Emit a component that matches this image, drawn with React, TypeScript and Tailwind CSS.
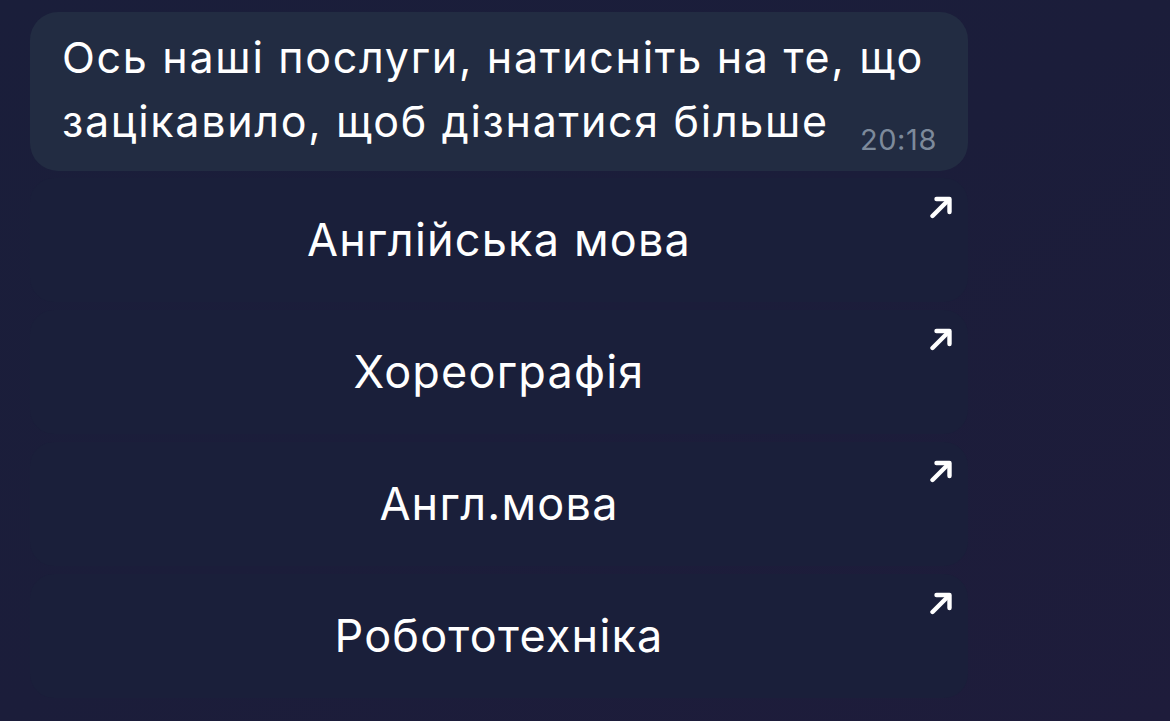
import React from "react";

function Arrow() {
  return (
    <svg width="24" height="24" viewBox="0 0 24 24" fill="none" className="absolute right-[15px] top-[17px]">
      <path d="M3.5 21 L19.5 5" stroke="white" strokeWidth="4.4" strokeLinecap="round" />
      <path d="M7.5 4 H20.5 V17" stroke="white" strokeWidth="4.4" strokeLinecap="round" strokeLinejoin="round" />
    </svg>
  );
}

const items = ["Англійська мова", "Хореографія", "Англ.мова", "Робототехніка"];

export default function App() {
  return (
    <div
      className="w-[1170px] h-[721px] overflow-hidden bg-gradient-to-br from-[#1a1e3a] via-[#1b1d3a] to-[#1e1c3b] pl-[30px] pt-[12px]"
      style={{ fontFamily: "Inter, Roboto, 'Noto Sans', sans-serif" }}
    >
      <div className="w-[938px] flex flex-col gap-[7px]">
        <div className="h-[159px] rounded-[28px] bg-[#222c42] pl-[32px] pr-[20px] pt-[13px] relative">
          <div className="text-white text-[43px] leading-[64px] tracking-[1.7px] whitespace-nowrap">
            Ось наші послуги, натисніть на те, що
            <br />
            зацікавило, щоб дізнатися більше
          </div>
          <div className="absolute right-[31px] top-[110px] text-[29px] leading-[36px] tracking-[0.6px] text-[#7d8a9b]">20:18</div>
        </div>
        <div className="flex flex-col gap-[8px]">
          {items.map((t) => (
            <div
              key={t}
              className="relative h-[124px] rounded-[24px] bg-[#1a1f3a] flex items-center justify-center text-white text-[45px] tracking-[1.2px] font-normal"
            >
              {t}
              <Arrow />
            </div>
          ))}
        </div>
      </div>
    </div>
  );
}
